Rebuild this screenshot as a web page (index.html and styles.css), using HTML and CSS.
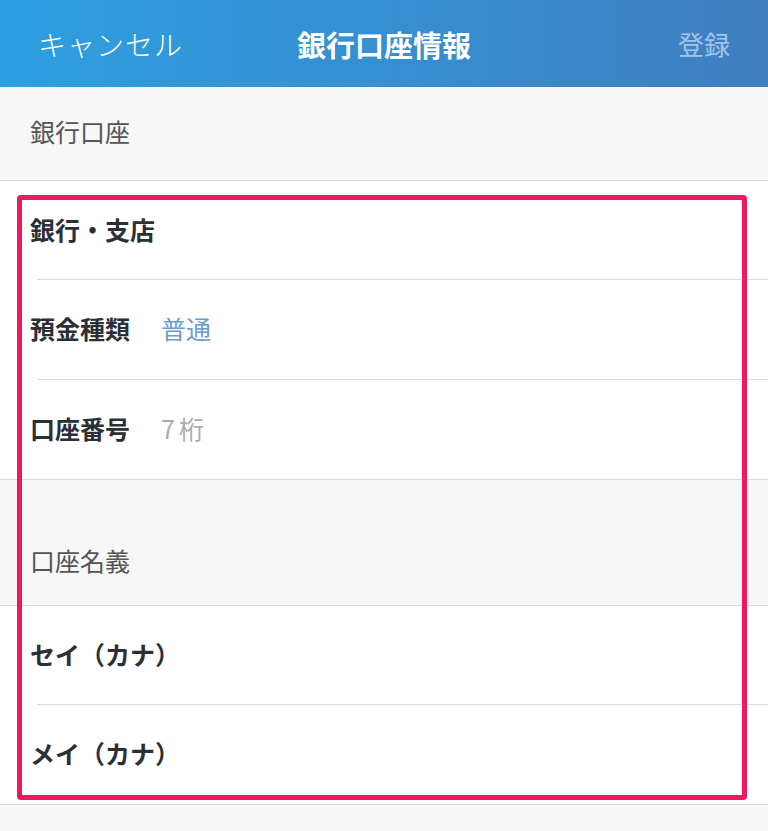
FILE: index.html
```html
<!DOCTYPE html>
<html lang="ja">
<head>
  <meta charset="UTF-8">
  <meta name="viewport" content="width=device-width, initial-scale=1.0">
  <title>銀行口座情報</title>
  <link rel="stylesheet" href="styles.css">
</head>
<body>
  <div class="navbar">
    <span class="nav-cancel">キャンセル</span>
    <span class="nav-title">銀行口座情報</span>
    <span class="nav-submit">登録</span>
  </div>

  <div class="page">
    <div class="section-header">銀行口座</div>
    <div class="group">
      <div class="row"><span class="row-label">銀行・支店</span></div>
      <div class="row"><span class="row-label">預金種類</span><span class="row-value">普通</span></div>
      <div class="row"><span class="row-label">口座番号</span><span class="row-placeholder">7桁</span></div>
    </div>

    <div class="section-header section-header-tall">口座名義</div>
    <div class="group">
      <div class="row"><span class="row-label">セイ（カナ）</span></div>
      <div class="row"><span class="row-label">メイ（カナ）</span></div>
    </div>

    <!-- highlight box drawn over the form -->
    <div class="highlight"></div>
  </div>
</body>
</html>
```

FILE: styles.css
```css
/* base */
body {
  margin: 0;
  background-color: #f7f7f7;
  font-family: "Noto Sans CJK JP", "Noto Sans", sans-serif;
  color: #2b2f36;
}

/* top bar */
.navbar {
  height: 87px;
  display: grid;
  grid-template-columns: 1fr auto 1fr;
  align-items: center;
  padding: 0 38px;
  background: linear-gradient(90deg, #2e9fe1, #3e7fc1);
  color: white;
}

.nav-cancel {
  font-size: 28px;
  font-weight: 300;
  letter-spacing: 1px;
}

.nav-title {
  font-size: 29px;
  font-weight: 700;
}

.nav-submit {
  justify-self: end;
  font-size: 26px;
  color: #a6c4e4;
}

/* list */
.page {
  position: relative;
}

.section-header {
  height: 94px;
  box-sizing: border-box;
  display: flex;
  align-items: center;
  padding: 0 0 5px 30px;
  font-size: 25px;
  color: #555;
  border-bottom: 1px solid #d9d9d9;
}

.section-header-tall {
  height: 126px;
  align-items: flex-end;
  padding-bottom: 27px;
}

.group {
  background-color: white;
  border-bottom: 1px solid #d9d9d9;
}

.row {
  height: 100px;
  box-sizing: border-box;
  display: flex;
  align-items: center;
  gap: 31px;
  margin-left: 37px;
  padding-bottom: 3px;
  border-bottom: 1px solid #dcdcdc;
}

.row:first-child,
.row:last-child {
  height: 99px;
}

.row:last-child {
  border-bottom: none;
}

.row-label {
  margin-left: -7px;
  font-size: 25px;
  font-weight: 700;
  color: #2b2f36;
}

.row-value {
  font-size: 25px;
  color: #6a9dcc;
}

.row-placeholder {
  font-size: 25px;
  letter-spacing: 4px;
  color: #ababab;
}

/* red annotation frame */
.highlight {
  position: absolute;
  left: 17px;
  top: 108px;
  width: 720px;
  height: 595px;
  border: 5px solid #f0175d;
  border-radius: 4px;
}
```
